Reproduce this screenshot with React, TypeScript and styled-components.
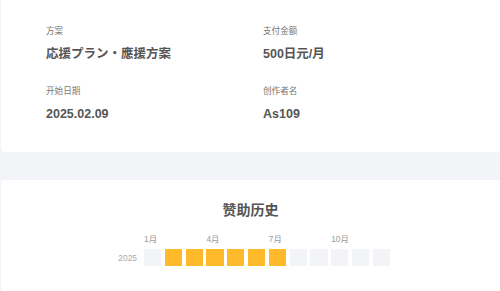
import React from "react";
import styled, { createGlobalStyle } from "styled-components";

const Global = createGlobalStyle`
  html, body { margin: 0; padding: 0; background: #f3f4f8; }
  body { font-family: "Liberation Sans", "Noto Sans CJK SC", "Noto Sans CJK JP", sans-serif; }
`;

const Page = styled.div`
  display: flex;
  flex-direction: column;
  gap: 28px;
  padding-left: 1px;
  width: 520px;
  height: 291px;
  overflow: hidden;
`;

const Card = styled.section<{ $top?: boolean }>`
  background: #fff;
  border-radius: ${(p) => (p.$top ? "0 0 4px 4px" : "4px")};
`;

const InfoGrid = styled.div`
  display: grid;
  grid-template-columns: 217px 217px;
  row-gap: 22.5px;
  padding: 25px 0 29.5px 45px;
`;

const Field = styled.div`
  display: flex;
  flex-direction: column;
  gap: 7.5px;
`;

const Label = styled.div`
  font-size: 8.6px;
  line-height: 12px;
  color: #777;
`;

const Value = styled.div`
  font-size: 12.5px;
  line-height: 18px;
  font-weight: 700;
  color: #555;
`;

const HistoryCard = styled(Card)`
  padding-top: 19.5px;
  height: 120px;
  display: flex;
  flex-direction: column;
  align-items: flex-start;
`;

const Title = styled.h2`
  margin: 0;
  width: 499px;
  text-align: center;
  font-size: 14px;
  line-height: 20px;
  font-weight: 700;
  color: #555;
`;

const Heatmap = styled.div`
  margin-top: 14.5px;
  margin-left: 109px;
  display: grid;
  grid-template-columns: 34px auto;
  row-gap: 5px;
`;

const YearLabel = styled.div`
  font-size: 8.4px;
  color: #a8a8a8;
  text-align: right;
  padding-right: 7px;
  align-self: center;
`;

const Cells = styled.div`
  display: grid;
  grid-template-columns: repeat(12, 17.3px);
  column-gap: 3.5px;
`;

const Month = styled.div`
  font-size: 8.4px;
  line-height: 10px;
  color: #9a9a9a;
  white-space: nowrap;
`;

const Cell = styled.div<{ $on: boolean }>`
  height: 17px;
  background: ${(p) => (p.$on ? "#ffba2b" : "#f3f4f8")};
`;

const months = [1, 2, 3, 4, 5, 6, 7, 8, 9, 10, 11, 12];
const active = new Set([2, 3, 4, 5, 6, 7]);

export default function App() {
  return (
    <>
      <Global />
      <Page>
        <Card $top>
          <InfoGrid>
            <Field>
              <Label>方案</Label>
              <Value>応援プラン・應援方案</Value>
            </Field>
            <Field>
              <Label>支付金额</Label>
              <Value>500日元/月</Value>
            </Field>
            <Field>
              <Label>开始日期</Label>
              <Value>2025.02.09</Value>
            </Field>
            <Field>
              <Label>创作者名</Label>
              <Value>As109</Value>
            </Field>
          </InfoGrid>
        </Card>
        <HistoryCard>
          <Title>赞助历史</Title>
          <Heatmap>
            <div />
            <Cells>
              {months.map((m) => (
                <Month key={m}>{(m - 1) % 3 === 0 ? `${m}月` : ""}</Month>
              ))}
            </Cells>
            <YearLabel>2025</YearLabel>
            <Cells>
              {months.map((m) => (
                <Cell key={m} $on={active.has(m)} />
              ))}
            </Cells>
          </Heatmap>
        </HistoryCard>
      </Page>
    </>
  );
}
